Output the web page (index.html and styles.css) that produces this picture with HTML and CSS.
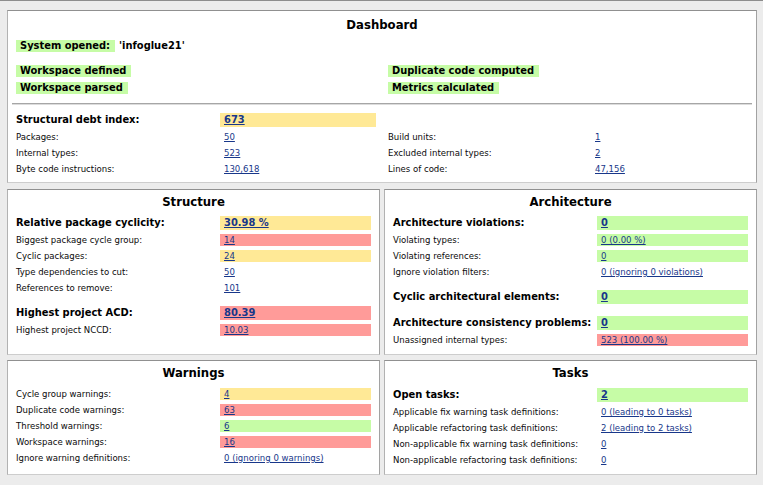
FILE: index.html
```html
<!DOCTYPE html>
<html lang="en">
<head>
<meta charset="utf-8">
<title>Dashboard</title>
<link rel="stylesheet" href="styles.css">
</head>
<body>
<div class="page">
  <section class="box dash">
    <h1 class="title">Dashboard</h1>
    <div class="opened"><span class="tag">System opened:</span><span class="sysname">'infoglue21'</span></div>
    <div class="tags">
      <span class="tag">Workspace defined</span><span class="tag">Duplicate code computed</span>
      <span class="tag">Workspace parsed</span><span class="tag">Metrics calculated</span>
    </div>
    <div class="sep"></div>
    <div class="metrics">
      <span class="lbl big">Structural debt index:</span><span class="val big y"><a href="#">673</a></span><span></span><span></span>
      <span class="lbl">Packages:</span><span class="val"><a href="#">50</a></span><span class="lbl rl">Build units:</span><span class="val"><a href="#">1</a></span>
      <span class="lbl">Internal types:</span><span class="val"><a href="#">523</a></span><span class="lbl rl">Excluded internal types:</span><span class="val"><a href="#">2</a></span>
      <span class="lbl">Byte code instructions:</span><span class="val"><a href="#">130,618</a></span><span class="lbl rl">Lines of code:</span><span class="val"><a href="#">47,156</a></span>
    </div>
  </section>

  <div class="grid">
    <section class="box">
      <h2 class="title">Structure</h2>
      <div class="row big"><span class="lbl">Relative package cyclicity:</span><span class="val y"><a href="#">30.98 %</a></span></div>
      <div class="row"><span class="lbl">Biggest package cycle group:</span><span class="val r"><a href="#">14</a></span></div>
      <div class="row"><span class="lbl">Cyclic packages:</span><span class="val y"><a href="#">24</a></span></div>
      <div class="row"><span class="lbl">Type dependencies to cut:</span><span class="val"><a href="#">50</a></span></div>
      <div class="row"><span class="lbl">References to remove:</span><span class="val"><a href="#">101</a></span></div>
      <div class="row big group"><span class="lbl">Highest project ACD:</span><span class="val r"><a href="#">80.39</a></span></div>
      <div class="row"><span class="lbl">Highest project NCCD:</span><span class="val r"><a href="#">10.03</a></span></div>
    </section>

    <section class="box">
      <h2 class="title">Architecture</h2>
      <div class="row big"><span class="lbl">Architecture violations:</span><span class="val g"><a href="#">0</a></span></div>
      <div class="row"><span class="lbl">Violating types:</span><span class="val g"><a href="#">0 (0.00 %)</a></span></div>
      <div class="row"><span class="lbl">Violating references:</span><span class="val g"><a href="#">0</a></span></div>
      <div class="row"><span class="lbl">Ignore violation filters:</span><span class="val"><a href="#">0 (ignoring 0 violations)</a></span></div>
      <div class="row big group"><span class="lbl">Cyclic architectural elements:</span><span class="val g"><a href="#">0</a></span></div>
      <div class="row big group"><span class="lbl">Architecture consistency problems:</span><span class="val g"><a href="#">0</a></span></div>
      <div class="row"><span class="lbl">Unassigned internal types:</span><span class="val r"><a href="#">523 (100.00 %)</a></span></div>
    </section>

    <section class="box">
      <h2 class="title">Warnings</h2>
      <div class="row first"><span class="lbl">Cycle group warnings:</span><span class="val y"><a href="#">4</a></span></div>
      <div class="row"><span class="lbl">Duplicate code warnings:</span><span class="val r"><a href="#">63</a></span></div>
      <div class="row"><span class="lbl">Threshold warnings:</span><span class="val g"><a href="#">6</a></span></div>
      <div class="row"><span class="lbl">Workspace warnings:</span><span class="val r"><a href="#">16</a></span></div>
      <div class="row"><span class="lbl">Ignore warning definitions:</span><span class="val"><a href="#">0 (ignoring 0 warnings)</a></span></div>
    </section>

    <section class="box">
      <h2 class="title">Tasks</h2>
      <div class="row big first"><span class="lbl">Open tasks:</span><span class="val g"><a href="#">2</a></span></div>
      <div class="row"><span class="lbl">Applicable fix warning task definitions:</span><span class="val"><a href="#">0 (leading to 0 tasks)</a></span></div>
      <div class="row"><span class="lbl">Applicable refactoring task definitions:</span><span class="val"><a href="#">2 (leading to 2 tasks)</a></span></div>
      <div class="row"><span class="lbl">Non-applicable fix warning task definitions:</span><span class="val"><a href="#">0</a></span></div>
      <div class="row"><span class="lbl">Non-applicable refactoring task definitions:</span><span class="val"><a href="#">0</a></span></div>
    </section>
  </div>
</div>
</body>
</html>
```

FILE: styles.css
```css
html {
  background: #ececec;
}
body {
  margin: 0;
  border-top: 1px solid #8d8d8d;
  background: #ececec;
  font-family: "DejaVu Sans Condensed", "DejaVu Sans", sans-serif;
  font-stretch: condensed;
  font-size: 9.5px;
  color: #0a0a0a;
}
.page {
  width: 750px;
  padding: 9px 0 8px 7px;
}
.box {
  background: #fff;
  border: 1px solid;
  border-color: #909090 #a2a2a2 #cdcdcd #b2b2b2;
  padding: 4px 8px 8px 8px;
}
.title {
  margin: 0;
  font-size: 13px;
  font-weight: bold;
  line-height: 16px;
  text-align: center;
  color: #000;
}
.dash {
  padding-top: 6px;
  padding-bottom: 7px;
  margin-bottom: 6px;
}
.tag {
  display: inline-block;
  background: #c6fca6;
  font-size: 11px;
  font-weight: bold;
  line-height: 12px;
  height: 12px;
  padding: 0 5px 0 4px;
  color: #000;
}
.opened {
  margin-top: 7px;
  display: flex;
  align-items: center;
  gap: 4px;
}
.sysname {
  font-size: 11px;
  font-weight: bold;
  line-height: 12px;
  color: #000;
}
.tags {
  margin-top: 13px;
  display: grid;
  grid-template-columns: 372px 1fr;
  row-gap: 5px;
  justify-items: start;
}
.sep {
  margin: 9px -4px 0 -4px;
  border-top: 1px solid #a6a6a6;
  border-bottom: 1px solid #dcdcdc;
}
.metrics {
  margin-top: 8px;
  display: grid;
  grid-template-columns: 204px 156px 215px 1fr;
  grid-template-rows: 14px 12px 12px 12px;
  row-gap: 4px;
}
.lbl {
  line-height: 12px;
  white-space: nowrap;
}
.lbl.big, .row.big .lbl {
  font-size: 11px;
  font-weight: bold;
  line-height: 14px;
  color: #000;
}
.rl {
  padding-left: 12px;
}
.val {
  padding-left: 4px;
  line-height: 12px;
  white-space: nowrap;
}
.val.big, .row.big .val {
  font-size: 11px;
  font-weight: bold;
  line-height: 14px;
}
.val a {
  color: #18378a;
  text-decoration: underline;
}
.y { background: #ffe996; }
.r { background: #ff9b99; }
.g { background: #c6fca6; }
.grid {
  display: grid;
  grid-template-columns: 1fr 1fr;
  column-gap: 4px;
  row-gap: 5px;
}
.row {
  display: grid;
  grid-template-columns: 204px 1fr;
  height: 12px;
  margin-top: 4px;
}
.row.big {
  height: 14px;
}
.title + .row {
  margin-top: 6px;
}
.row.group {
  margin-top: 12px;
}
.row.first {
  margin-top: 7px;
}
```
